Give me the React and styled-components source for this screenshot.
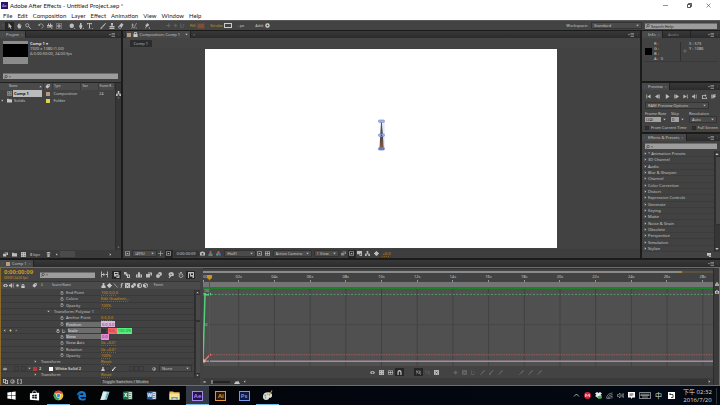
import React, { useState } from "react";
import styled, { createGlobalStyle, css } from "styled-components";

const GlobalStyle = createGlobalStyle`
  * {
    box-sizing: border-box;
  }
  body {
    margin: 0;
    background: #1b1b1b;
    color: #c6c6c6;
    font-family: "Noto Sans", "Noto Sans CJK TC", sans-serif;
    font-size: 4px;
    line-height: 5px;
    overflow: hidden;
  }
  button, input, select {
    margin: 0;
    padding: 0;
    border: 0;
    border-radius: 0;
    background: none;
    color: inherit;
    font: inherit;
    outline: none;
  }
  a {
    color: inherit;
    text-decoration: none;
  }
`;

/* every glyph is drawn on a 12 x 12 grid */
const glyphs = {
  arrow: <path d="M3 0v10l2.500-2 1.700 4 1.800-.8L7.300 7.400H10z" />,
  hand: <path d="M2 5l1-1 1 2V2h1.400v3V1h1.500v4l.6-3.500h1.400V6l1-1.500L11 5l-2 6H5z" />,
  zoom: (
    <g fill="none" stroke="currentColor">
      <circle cx="4.500" cy="4.500" r="3.200" strokeWidth="1.500" />
      <path d="M7 7l4.500 4.500" strokeWidth="2" />
    </g>
  ),
  rotate: (
    <g>
      <path d="M2 4a4.500 4.500 0 1 1 5 6.500" fill="none" stroke="currentColor" strokeWidth="1.200" />
      <path d="M0 3h5L2 6.500z" />
    </g>
  ),
  camera: <path d="M0 4h2V1h2v3h2V1h2v3l3-1v5L8 7v2h3v2H8V9H0V7h5V6H0z" />,
  anchor: (
    <g fill="none" stroke="currentColor">
      <rect x="1" y="1" width="10" height="10" strokeDasharray="2 2" strokeWidth="1.500" />
      <circle cx="6" cy="6" r="2.200" strokeWidth="1.500" />
      <path d="M6 2v8M2 6h8" />
    </g>
  ),
  disc: <path d="M1 5.500a4.500 4.500 0 1 1 9 0 4.500 4.500 0 1 1-9 0M9 10h3v2z" />,
  pen: <path d="M4 0h3v3l2 3-2.500 6h-2L2 6l2-3zM9 10h3v2z" />,
  type: <path d="M0 0h10v3H9L8 1.500H6V10l1.500 1h-5L4 10V1.500H2L1 3H0zM9 10h3v2z" />,
  brush: <path d="M11 0l1 1-6 7-2-1.500zM3.500 7L5.500 9 3 11.500H0z" />,
  stamp: <path d="M4 0h4v3L7 6h4v3H1V6h4L4 3zM1 10h10v2H1z" />,
  eraser: <path d="M7 0l4 3-5 8H2L0 8zM3 7L2 8.500 3 10h2l1-2z" fillRule="evenodd" />,
  roto: (
    <g fill="none" stroke="currentColor" strokeWidth="1.300">
      <path d="M3 1v7M1 4h5M3 8l-2 3M4 8l2 3M11 0L6 10M9 10h3" />
    </g>
  ),
  pin: <path d="M6 0l4 3-1 3-3 1-4 5 2-6-2-2 3-1zM9 9h3v3z" />,
  axis: <path d="M5 1h2v4h4v2H7v4H5V7H1V5h4z" />,
  axisLines: <path d="M1 1h2v8h6v2H1zM8 2l3 1-3 6z" />,
  down: <path d="M1 3h10L6 9z" />,
  up: <path d="M1 9h10L6 3z" />,
  right: <path d="M3 1v10l6-5z" />,
  left: <path d="M9 1v10L3 6z" />,
  menu: <path d="M0 4h4L2 7zM5 2h7v1.300H5zM5 5h7v1.300H5zM5 8h7v1.300H5z" />,
  grip: <path d="M5 0h2v2H5zM5 4h2v2H5zM5 8h2v2H5z" />,
  search: (
    <g fill="none" stroke="currentColor" strokeWidth="1.500">
      <circle cx="6.500" cy="4.500" r="3.500" />
      <path d="M4 7l-3 4" />
    </g>
  ),
  tag: <path d="M5 1l6-1 1 5-6 6-5-4zM9 2.500a1 1 0 1 0 .1 0" fillRule="evenodd" />,
  flow: <path d="M4 0h4v4H7v2h4v2h1v4H8V8H4v4H0V8h1V6h4V4H4z" />,
  comp: <path d="M0 0h12v12H0zM2 2v2h2V2zM2 8v2h2V8zM8 2v2h2V2zM8 8v2h2V8z" fillRule="evenodd" />,
  folder: <path d="M0 2h4l1 1h7v8H0z" />,
  footage: <path d="M0 4h8v7H0zM4 1h8v6h-3V3H4z" />,
  trash: <path d="M3 0h6v1.500h2V3H1V1.500h2zM2 4h8l-1 8H3zM4 5v6h1V5zM7 5v6h1V5z" fillRule="evenodd" />,
  eye: <path d="M0 6c3-5 9-5 12 0-3 5-9 5-12 0zM6 4a2 2 0 1 0 .1 0" fillRule="evenodd" />,
  sound: (
    <g>
      <path d="M0 4h3l4-4v12L3 8H0z" />
      <path d="M9 3q2 3 0 6M10.500 1q3 5 0 10" fill="none" stroke="currentColor" strokeWidth="1.200" />
    </g>
  ),
  lock: <path d="M2 5V3q0-3 4-3t4 3v2h1v7H1V5zM4 5h4V3Q8 2 6 2T4 3z" fillRule="evenodd" />,
  dot: <circle cx="6" cy="6" r="3" />,
  ring: <circle cx="6" cy="6" r="3.800" fill="none" stroke="currentColor" strokeWidth="3" />,
  diamond: <path d="M6 1l5 5-5 5-5-5z" />,
  watch: (
    <g fill="none" stroke="currentColor" strokeWidth="1.500">
      <circle cx="6" cy="7.300" r="3.800" />
      <path d="M6 0v3M4 .8h4M6 7l2-2M1 2l2 2" />
    </g>
  ),
  graph: <path d="M1 0h1.500v10H8v2H1zM5 3h2v2H5zM8 6h2v2H8z" />,
  link: (
    <g fill="none" stroke="currentColor" strokeWidth="1.500">
      <circle cx="6" cy="6" r="4.500" />
      <path d="M6 4h3v4H5V6" />
    </g>
  ),
  slash: <path d="M9 0h3L4 9v3H0V9z" />,
  thinSlash: <path d="M2 1l9 10" stroke="currentColor" strokeWidth="1.500" />,
  fx: <path d="M10 0H7Q5 0 5 4H3v1.500h2V9q0 2-2 1.500V12q4 0 4-3V5.500h2V4H7q0-2.500 1-2.500h2z" />,
  film: <path d="M0 0h12v12H0zM2 1.500v2h2v-2zM2 8.500v2h2v-2zM8 1.500v2h2v-2zM8 8.500v2h2v-2zM4.500 5h3v2h-3z" fillRule="evenodd" />,
  blur: <path d="M8 0a4 4 0 1 1 0 8 4 4 0 0 1-4 4 4 4 0 0 1-4-4 4 4 0 0 1 4-4 4 4 0 0 1 4-4zM5 4.500l2 2 1-1-2-2z" fillRule="evenodd" />,
  half: <path d="M6 0a6 6 0 1 1 0 12A6 6 0 0 1 6 0zM6 2v8a4 4 0 0 0 0-8z" fillRule="evenodd" />,
  cube: <path d="M6 0l6 3v6l-6 3-6-3V3zM6 1.500L2.500 3.200 6 5l3.500-1.800zM6.500 6v4.500l4-2V4z" fillRule="evenodd" />,
  shy: <path d="M4 2a2 2 0 1 1 4 0v3h4v6H0V5h4zM2 7v2h2V7zM8 7v2h2V7z" fillRule="evenodd" />,
  mini: <path d="M0 1h1.500v4H4V3l3 3-3 3V7H1.500v4H0zM12 1h-1.500v4H8v2h2.500v4H12z" />,
  draft: <path d="M0 0h9v9H0zM2 2v2h5V2zM4 6h7v6H5v-2h4V7H4z" fillRule="evenodd" />,
  puppet: <path d="M0 0h5v3h2v2h5v7H6V8H4V5H0zM8 7v3h2V7z" fillRule="evenodd" />,
  brain: <path d="M3 1q4-2 7 0 3 3 1 7H7l-4 4H1l2-4Q-1 4 3 1zM5 3v3l3-1z" fillRule="evenodd" />,
  graphEd: <path d="M0 0h12v12H9V9H4V3H2v9H0zM6 3v3h4V3z" fillRule="evenodd" />,
  first: <path d="M1 1h1.800v10H1zM11 1v10L3.500 6z" />,
  back: <path d="M7 1v10L0 6zM8 1h1.500v10H8zM10.500 1H12v10h-1.500z" />,
  play: <path d="M2 0v12l9-6z" />,
  step: <path d="M5 1v10l7-5zM0 1h1.500v10H0zM2.500 1H4v10H2.500z" />,
  last: <path d="M1 1v10l7.500-5zM9.200 1H11v10H9.200z" />,
  loop: <path d="M0 3h7V0l4 4-4 3V5H2v5h8V8h2v4H0z" />,
  ram: <path d="M0 1h1.500v10H0zM2.500 1H4v10H2.500zM5 1h7v2H8l4 3-7 5z" />,
  snapshot: <path d="M0 3h3l1-2h4l1 2h3v8H0zM6 4.500a2.300 2.300 0 1 0 .1 0" fillRule="evenodd" />,
  person: <path d="M4 0h4v5l3 3v4H1V8l3-3z" />,
  grid: <path d="M0 1h12v10H0zM1.500 2.500v3h3.700v-3zM6.700 2.500v3h3.800v-3zM1.500 7v2.500h3.700V7zM6.700 7v2.500h3.800V7z" fillRule="evenodd" />,
  region: <path d="M0 1h12v10H0zM1.500 2.500v7h9v-7zM3 7l3-3 3 3v1H3z" fillRule="evenodd" />,
  sun: <path d="M5 0h2v2.500l2-1L10 3 9 5h3v2H9l1 2-1.500 1.500-1.500-1V12H5V9.500l-2 1L1.500 9 3 7H0V5h3L1.500 3 3 1.500l2 1z" />,
  magnet: <path d="M1 12V5a5 5 0 0 1 10 0v7H8V5.500a2 2 0 0 0-4 0V12z" />,
  fit: (
    <g fill="none" stroke="currentColor" strokeWidth="1.300">
      <path d="M0 11V1l3 4M12 1v10" />
      <circle cx="6.500" cy="5" r="3" />
      <path d="M8 7l3 4" />
    </g>
  ),
  ease: <path d="M0 10q5 0 6-5t6-4v2Q9 3 8 6t-8 6zM4 5h3v3H4z" />,
  hill: <path d="M0 10l4-6 2 2 2-3 4 7z" />,
  braces: <path d="M4 0v2H3v3L2 6l1 1v3h1v2H1V7L0 6l1-1V0zM8 0v2h1v3l1 1-1 1v3H8v2h3V7l1-1-1-1V0z" />,
  toggles: <path d="M0 0h7v3h5v9H5V9H0zM2 2v5h3V2zM7 5v5h3V5z" fillRule="evenodd" />,
  plus: <path d="M5.300 0h1.400v5.300H12v1.400H6.700V12H5.300V6.700H0V5.300h5.300z" />,
  newPreset: <path d="M0 0h12v12H6V8H0zM8 6v4h2V6z" fillRule="evenodd" />,
};

const Svg = styled.svg`
  display: block;
  flex: none;
  width: ${({ $size }) => $size}px;
  height: ${({ $size }) => $size}px;
  color: ${({ $color }) => $color || "inherit"};
  fill: currentColor;
`;

const Glyph = ({ name, size = 5, color }) => (
  <Svg viewBox="0 0 12 12" $size={size} $color={color} aria-hidden="true">
    {glyphs[name]}
  </Svg>
);

const Screen = styled.div`
  height: 100vh;
  display: flex;
  flex-direction: column;
`;

const TitleBar = styled.header`
  flex: none;
  height: 11px;
  display: flex;
  align-items: center;
  gap: 2px;
  padding: 0 6px 0 1px;
  background: #fff;
  color: #222;
  font-family: Lato, "Open Sans", sans-serif;

  h1 {
    flex: 1;
    margin: 0;
    font-size: 6px;
    line-height: 8px;
    font-weight: 400;
  }
`;

const WindowButton = styled.button`
  width: 22px;
  height: 9px;
  display: flex;
  align-items: center;
  justify-content: center;

  &:last-child {
    width: 12px;
    justify-content: flex-end;
    padding-right: 3px;
  }
  svg {
    width: 5px;
    height: 5px;
    fill: none;
    stroke: #222;
  }
`;

const MenuBar = styled.nav`
  flex: none;
  height: 9px;
  display: flex;
  align-items: center;
  gap: 5px;
  padding: 0 3px;
  background: #fff;
  color: #222;
  font-family: Lato, "Open Sans", sans-serif;
  font-size: 6px;
  line-height: 8px;
`;

const Bar = styled.div`
  flex: none;
  height: ${({ $height }) => $height || 8}px;
  display: flex;
  align-items: center;
  gap: ${({ $gap }) => $gap || 0}px;
  padding: 0 ${({ $pad = 2 }) => $pad}px;
  background: ${({ $bg }) => $bg || "#434343"};
`;

const Toolbar = styled(Bar)`
  border-top: 1px solid #5a5a5a;
`;

const IconButton = styled.button`
  flex: none;
  width: ${({ $width }) => $width || 9}px;
  height: ${({ $height }) => $height || 8}px;
  display: flex;
  align-items: center;
  justify-content: center;
  color: ${({ $dim }) => ($dim ? "#666" : "#bdbdbd")};
  background: ${({ $pressed }) => ($pressed ? "#262626" : "none")};
`;

const Spring = styled.span`
  flex: 1;
`;

const Gap = styled.span`
  flex: none;
  width: ${({ $width }) => $width}px;
`;

const Orange = styled.button`
  color: #d0951c;
  white-space: nowrap;
  text-decoration: ${({ $line }) => ($line ? "underline dotted 1px #7a5f2a" : "none")};
`;

const Swatch = styled.i`
  flex: none;
  width: ${({ $width }) => $width || 4}px;
  height: ${({ $height }) => $height || 4}px;
  background: ${({ $fill }) => $fill};
  border: ${({ $edge }) => ($edge ? `1px solid ${$edge}` : "0")};
`;

const SelectShell = styled.span`
  flex: ${({ $width }) => ($width ? "none" : 1)};
  width: ${({ $width }) => ($width ? `${$width}px` : "auto")};
  min-width: 0;
  height: 7px;
  display: flex;
  align-items: center;
  padding: 0 2px;
  border: 1px solid #333;
  background: #4a4a4a;

  select {
    flex: 1;
    min-width: 0;
    height: 5px;
    appearance: none;
    overflow: visible;
  }
`;

const Select = ({ label, value, width }) => (
  <SelectShell $width={width}>
    <select aria-label={label} defaultValue={value}>
      <option>{value}</option>
    </select>
    <Glyph name="down" size={3} />
  </SelectShell>
);

const SearchShell = styled.label`
  flex: ${({ $width }) => ($width ? "none" : "0 0 auto")};
  width: ${({ $width }) => ($width ? `${$width}px` : "auto")};
  height: 6px;
  display: flex;
  align-items: center;
  gap: 1px;
  padding: 0 1px;
  margin: ${({ $margin }) => $margin || 0};
  background: #9d9d9d;
  border-top: 1px solid #6d6d6d;
  color: #222;

  input {
    flex: 1;
    min-width: 0;
    height: 5px;
    &::placeholder {
      color: #222;
      opacity: 1;
    }
  }
`;

const Search = ({ label, width, margin, placeholder, arrow = true }) => (
  <SearchShell $width={width} $margin={margin}>
    <Glyph name="search" size={4} />
    {arrow && <Glyph name="down" size={2} />}
    <input type="text" aria-label={label} placeholder={placeholder} />
  </SearchShell>
);

const Panel = styled.section`
  flex: ${({ $flex }) => $flex || "none"};
  min-width: 0;
  min-height: 0;
  display: flex;
  flex-direction: column;
  background: #424242;
`;

const TabStrip = styled.div`
  flex: none;
  height: 7px;
  display: flex;
  align-items: center;
  padding-right: 1px;
  background: linear-gradient(#383838, #2b2b2b);
`;

const Tab = styled.button`
  height: 7px;
  display: flex;
  align-items: center;
  gap: 2px;
  padding: 0 2px 0 1px;
  white-space: nowrap;
  color: ${({ $active }) => ($active ? "#c6c6c6" : "#808080")};
  background: ${({ $active }) => ($active ? "#484848" : "none")};
  border-right: 1px solid #222;
`;

const Close = styled.span`
  color: #888;
`;

const PanelTabs = ({ active, other }) => (
  <TabStrip>
    <Tab $active>
      <Glyph name="grip" size={3} color="#666" />
      {active}
      <Close>×</Close>
    </Tab>
    {other && (
      <Tab>
        <Gap $width={2} />
        {other}
        <Gap $width={7} />
      </Tab>
    )}
    <Spring />
    <Glyph name="menu" size={6} color="#999" />
    <Gap $width={2} />
    <Glyph name="grip" size={3} color="#666" />
  </TabStrip>
);

const Workspace = styled.main`
  flex: 1;
  min-height: 0;
  display: grid;
  grid-template-columns: 17fr 73fr 11fr;
  gap: 2px;
  padding-top: 1px;
`;

/* project panel */

const Preview = styled.div`
  flex: 1;
  display: flex;
  gap: 2px;
  padding: 3px;

  p {
    margin: 0;
    white-space: nowrap;
  }
  b {
    color: #ddd;
  }
`;

const Thumb = styled.div`
  width: 25px;
  height: 23px;
  background: #000;
  border-style: solid;
  border-color: #8b8b8b;
  border-width: 3px 0 7px;
`;

const FileTable = styled.table`
  width: 100%;
  border-collapse: collapse;
  table-layout: fixed;

  th {
    height: 7px;
    padding: 0;
    background: #4a4a4a;
    border-right: 1px solid #3a3a3a;
    font-weight: 400;
    font-size: 3px;
    text-align: left;
    white-space: nowrap;
  }
  td {
    height: 7px;
    padding: 0;
    white-space: nowrap;
  }
  th:nth-child(n + 3),
  td:nth-child(n + 3) {
    padding-left: 1px;
  }
`;

const Cell = styled.span`
  display: flex;
  align-items: center;
  gap: 1px;
  justify-content: ${({ $align }) => $align || "flex-start"};
  padding: 0 1px;
`;

const FileName = styled.span`
  flex: 1;
  height: 7px;
  line-height: 7px;
  padding-left: 1px;
  ${({ $selected }) =>
    $selected &&
    css`
      background: #bcbcbc;
      color: #111;
      font-weight: 700;
    `}
`;

const FileArea = styled.div`
  flex: 0 0 168px;
  min-height: 0;
  display: flex;
  border-top: 1px solid #222;

  > div:first-child {
    flex: 1;
    min-width: 0;
  }
`;

const ScrollColumn = styled.div`
  flex: none;
  width: 6px;
  display: flex;
  flex-direction: column;
  align-items: center;
  justify-content: space-between;
  padding: ${({ $top = 1 }) => $top}px 0 1px;
  background: #363636;
  border-left: 1px solid #2d2d2d;
`;

const Thumbnail = styled.span`
  width: 5px;
  flex: ${({ $grow }) => $grow};
  background: #484848;
  border: 1px solid #2f2f2f;
  border-right: 0;
`;

const ProjectPanel = () => (
  <Panel>
    <PanelTabs active="Project" />
    <Preview>
      <Thumb />
      <div>
        <p>
          <b>Comp 1 ▾</b>
        </p>
        <p>1920 x 1080 (1.00)</p>
        <p>Δ 0:00:30:00, 24.00 fps</p>
      </div>
    </Preview>
    <Search label="Search project" margin="0 3px 3px" />
    <FileArea>
      <div>
        <FileTable>
          <colgroup>
            <col style={{ width: "38%" }} />
            <col style={{ width: "8%" }} />
            <col style={{ width: "25%" }} />
            <col style={{ width: "15%" }} />
            <col />
          </colgroup>
          <thead>
            <tr>
              <th>
                <Cell>
                  <Gap $width={7} />
                  Name
                  <Spring />
                  <Glyph name="up" size={3} />
                </Cell>
              </th>
              <th>
                <Cell $align="center">
                  <Glyph name="tag" size={5} />
                </Cell>
              </th>
              <th>Type</th>
              <th>Size</th>
              <th>Frame R...</th>
            </tr>
          </thead>
          <tbody>
            <tr>
              <td>
                <Cell>
                  <Gap $width={5} />
                  <Glyph name="comp" color="#77888a" />
                  <FileName $selected>Comp 1</FileName>
                </Cell>
              </td>
              <td>
                <Cell $align="center">
                  <Swatch $fill="#b79b7d" />
                </Cell>
              </td>
              <td>Composition</td>
              <td />
              <td>24</td>
            </tr>
            <tr>
              <td>
                <Cell>
                  <Glyph name="right" size={3} />
                  <Gap $width={1} />
                  <Glyph name="folder" />
                  <FileName>Solids</FileName>
                </Cell>
              </td>
              <td>
                <Cell $align="center">
                  <Swatch $fill="#e0d24c" />
                </Cell>
              </td>
              <td>Folder</td>
              <td />
              <td />
            </tr>
          </tbody>
        </FileTable>
      </div>
      <ScrollColumn $top={8}>
        <Glyph name="flow" size={5} />
        <Glyph name="up" size={3} color="#777" />
        <Spring />
        <Glyph name="down" size={3} color="#777" />
      </ScrollColumn>
    </FileArea>
    <Bar $bg="#3b3b3b" $pad={1}>
      <IconButton><Glyph name="footage" /></IconButton>
      <IconButton><Glyph name="folder" /></IconButton>
      <IconButton><Glyph name="comp" /></IconButton>
      <Gap $width={2} />
      8 bpc
      <Gap $width={4} />
      <IconButton><Glyph name="trash" /></IconButton>
      <Gap $width={2} />
      <Glyph name="left" size={3} />
      <Gap $width={2} />
      <Swatch $fill="#4b4b4b" $width={15} $height={6} />
      <Spring />
      <Glyph name="right" size={3} />
      <Gap $width={8} />
    </Bar>
  </Panel>
);

/* composition viewer */

const CompButton = styled.button`
  height: 7px;
  padding: 0 4px;
  background: #2c2c2c;
  color: #b8b8b8;
`;

const Stage = styled.div`
  flex: 1;
  min-height: 0;
  display: flex;
  justify-content: center;
  padding: 1px 0;
`;

const Canvas = styled.svg`
  display: block;
  width: 68%;
  height: 100%;
  background: #fff;
`;

const Artwork = () => (
  <Canvas viewBox="0 0 353 199" preserveAspectRatio="none" role="img" aria-label="Comp 1">
    <defs>
      <linearGradient id="needle" x1="0" y1="0" x2="0" y2="1">
        <stop offset="0" stopColor="#44608f" />
        <stop offset="0.500" stopColor="#47464d" />
        <stop offset="1" stopColor="#8b5b38" />
      </linearGradient>
    </defs>
    <path d="M176.500 73L175 100h4.500L177.500 73z" fill="url(#needle)" />
    <path d="M179.500 72v28" stroke="#b9c3ea" strokeWidth="0.600" />
    <g fill="#a9b6e4" stroke="#6b7cc0" strokeWidth="0.600">
      <rect x="174" y="71" width="6" height="2.400" rx="1" />
      <rect x="174" y="85" width="6" height="2.400" rx="1" />
      <rect x="174" y="98.500" width="6" height="2.600" rx="1" fill="#6979c2" />
    </g>
    <circle cx="177" cy="86.200" r="0.800" fill="#303b75" />
  </Canvas>
);

const TimeButton = styled.button`
  width: 25px;
  height: 6px;
  background: #343434;
`;

const CompositionPanel = () => (
  <Panel>
    <TabStrip>
      <Glyph name="grip" size={3} color="#666" />
      <Tab $active>
        <Swatch $fill="#b79b7d" />
        <Glyph name="lock" size={5} />
        Composition: Comp 1
        <Gap $width={1} />
        <Glyph name="down" size={3} />
      </Tab>
      <Gap $width={2} />
      <Close>×</Close>
      <Spring />
      <Glyph name="menu" size={6} color="#999" />
      <Gap $width={2} />
      <Glyph name="grip" size={3} color="#666" />
    </TabStrip>
    <Bar $height={10} $pad={7} $bg="#444">
      <CompButton>Comp 1</CompButton>
    </Bar>
    <Stage>
      <Artwork />
    </Stage>
    <Bar $height={9} $bg="#3e3e3e" $pad={0}>
      <IconButton><Glyph name="region" /></IconButton>
      <Select label="Magnification" value="(49%)" width={25} />
      <IconButton $width={8}><Glyph name="plus" /></IconButton>
      <IconButton $width={8} $pressed><Glyph name="region" /></IconButton>
      <Gap $width={1} />
      <TimeButton>0:00:00:09</TimeButton>
      <IconButton $width={8}><Glyph name="snapshot" /></IconButton>
      <IconButton $width={8}><Glyph name="person" color="#777" /></IconButton>
      <IconButton $width={8}>
        <svg width="5" height="5" viewBox="0 0 12 12" aria-hidden="true">
          <circle cx="6" cy="3.500" r="3" fill="#cc5b4f" />
          <circle cx="3" cy="8.500" r="3" fill="#4da35a" />
          <circle cx="9" cy="8.500" r="3" fill="#4e68cf" />
        </svg>
      </IconButton>
      <Gap $width={1} />
      <Select label="Resolution" value="(Half)" width={32} />
      <IconButton $width={8}><Glyph name="region" /></IconButton>
      <IconButton $width={8}><Glyph name="grid" /></IconButton>
      <Gap $width={1} />
      <Select label="3D view" value="Active Camera" width={39} />
      <Gap $width={2} />
      <Select label="View layout" value="1 View" width={25} />
      <Gap $width={1} />
      <IconButton $width={8}><Glyph name="footage" color="#888" /></IconButton>
      <IconButton $width={8} $pressed><Glyph name="region" /></IconButton>
      <IconButton $width={8}><Glyph name="newPreset" /></IconButton>
      <IconButton $width={8}><Glyph name="flow" /></IconButton>
      <IconButton $width={9}><Glyph name="sun" /></IconButton>
      <Gap $width={2} />
      <Orange $line>+0.0</Orange>
    </Bar>
  </Panel>
);

/* right column */

const SideColumn = styled.div`
  min-width: 0;
  min-height: 0;
  display: flex;
  flex-direction: column;
  gap: 2px;
`;

const InfoBody = styled.div`
  height: 43px;
  padding: 3px 2px;
`;

const InfoRow = styled.div`
  display: flex;
  align-items: center;
  height: 21px;
  border-bottom: 1px solid #393939;
  white-space: pre;

  p {
    margin: 0;
  }
`;

const Readout = styled.div`
  align-self: flex-start;
  width: ${({ $width }) => $width || 26}px;
`;

const Rule = styled.span`
  width: 1px;
  height: 19px;
  background: #2f2f2f;
`;

const PreviewBody = styled.div`
  flex: 1;
  display: flex;
  flex-direction: column;
  padding: 2px 3px;
`;

const Transport = styled.div`
  display: flex;
  justify-content: space-between;
  margin-bottom: 2px;
`;

const Fields = styled.div`
  display: grid;
  grid-template-columns: 24px 16px 1fr;
  column-gap: 2px;
  margin-top: 2px;
  white-space: nowrap;
`;

const Combo = styled.span`
  display: flex;
  align-items: center;
  gap: 2px;
  height: 7px;

  input {
    flex: 1;
    min-width: 0;
    height: 5px;
    padding-left: 1px;
    background: #a2a2a2;
    color: #222;
  }
`;

const Checks = styled.div`
  display: flex;
  gap: 5px;
  margin-top: 2px;

  label {
    display: flex;
    align-items: center;
    gap: 2px;
    white-space: nowrap;
  }
  input {
    appearance: none;
    width: 4px;
    height: 4px;
    background: #333;
    border: 1px solid #2a2a2a;
  }
`;

const EffectList = styled.ul`
  flex: 1;
  min-height: 0;
  min-width: 0;
  display: grid;
  grid-auto-rows: 1fr;
  margin: 0;
  padding: 0;
  list-style: none;
`;

const Effect = styled.li`
  display: flex;
  align-items: center;
  min-height: 0;
  border-bottom: 1px solid #3c3c3c;

  button {
    display: flex;
    align-items: center;
    gap: 1px;
    padding-left: 2px;
    white-space: nowrap;
  }
`;

const EffectArea = styled.div`
  flex: 1;
  min-height: 0;
  display: flex;
`;

const effects = [
  "* Animation Presets",
  "3D Channel",
  "Audio",
  "Blur & Sharpen",
  "Channel",
  "Color Correction",
  "Distort",
  "Expression Controls",
  "Generate",
  "Keying",
  "Matte",
  "Noise & Grain",
  "Obsolete",
  "Perspective",
  "Simulation",
  "Stylize",
];

const transport = ["first", "back", "play", "step", "last", "sound", "loop", "ram"];

const SidePanels = () => (
  <SideColumn>
    <Panel>
      <PanelTabs active="Info" other="Audio" />
      <InfoBody>
        <InfoRow>
          <Gap $width={1} />
          <Swatch $fill="#000" $width={7} $height={7} />
          <Gap $width={2} />
          <Readout>
            <p>R :</p>
            <p>G :</p>
            <p>B :</p>
            <p>A :  0</p>
          </Readout>
          <Rule />
          <Gap $width={2} />
          <Glyph name="plus" size={4} color="#888" />
          <Gap $width={2} />
          <Readout>
            <p>X : 573</p>
            <p>Y : 1086</p>
          </Readout>
        </InfoRow>
      </InfoBody>
    </Panel>
    <Panel>
      <PanelTabs active="Preview" />
      <PreviewBody>
        <Transport>
          {transport.map((name) => (
            <IconButton key={name} $width={7} aria-label={name}>
              <Glyph name={name} />
            </IconButton>
          ))}
        </Transport>
        <Select label="Preview options" value="RAM Preview Options" width={64} />
        <Fields>
          <label htmlFor="rate">Frame Rate</label>
          <label htmlFor="skip">Skip</label>
          <span>Resolution</span>
          <Combo>
            <input id="rate" defaultValue="(24)" />
            <Glyph name="down" size={3} />
            <Gap $width={1} />
          </Combo>
          <Combo>
            <input id="skip" defaultValue="0" />
            <Glyph name="down" size={3} />
            <Gap $width={1} />
          </Combo>
          <Select label="Resolution" value="Auto" />
        </Fields>
        <Checks>
          <label>
            <input type="checkbox" />
            From Current Time
          </label>
          <label>
            <input type="checkbox" />
            Full Screen
          </label>
        </Checks>
      </PreviewBody>
    </Panel>
    <Panel $flex={1}>
      <PanelTabs active="Effects & Presets" />
      <Search label="Search effects" margin="2px 3px 2px" />
      <EffectArea>
        <EffectList>
          {effects.map((name) => (
            <Effect key={name}>
              <button>
                <Glyph name="right" size={3} />
                {name}
              </button>
            </Effect>
          ))}
        </EffectList>
        <ScrollColumn>
          <Glyph name="up" size={4} />
          <Thumbnail $grow={3} />
          <Spring />
          <Glyph name="down" size={4} />
        </ScrollColumn>
      </EffectArea>
      <Bar $height={6}>
        <Spring />
        <Glyph name="newPreset" size={4} />
        <Gap $width={7} />
      </Bar>
    </Panel>
  </SideColumn>
);

/* timeline */

const TimelinePanel = styled.section`
  flex: none;
  height: 126px;
  margin-top: 2px;
  display: flex;
  flex-direction: column;
`;

const TimelineBody = styled.div`
  flex: 1;
  min-height: 0;
  display: flex;
  background: #424242;
  border: 1px solid #8d6b25;
`;

const LayerSide = styled.div`
  flex: none;
  width: 199px;
  display: flex;
  flex-direction: column;
`;

const Timecode = styled.div`
  width: 36px;
  color: #d1961d;
  font-size: 3px;
  line-height: 4px;

  b {
    display: block;
    font-size: 6px;
    line-height: 7px;
  }
`;

const ColumnHead = styled(Bar)`
  background: #4b4b4b;
  border-top: 1px solid #363636;
  font-size: 3px;
  white-space: nowrap;
`;

const Rows = styled.div`
  flex: 1;
  min-width: 0;
  display: grid;
  grid-auto-rows: 1fr;
`;

const Row = styled.div`
  display: grid;
  grid-template-columns: 100px 1fr;
  align-items: center;
  min-height: 0;
  border-bottom: 1px solid #393939;
  white-space: nowrap;
`;

const RowName = styled.div`
  display: flex;
  align-items: center;
  gap: 2px;
  padding-left: ${({ $indent }) => $indent}px;
`;

const PropName = styled.span`
  width: 36px;
  ${({ $selected }) =>
    $selected &&
    css`
      color: #e0e0e0;
      background: #6d6d6d;
    `}
`;

const Values = styled.div`
  display: flex;
  align-items: center;
`;

const Chip = styled.button`
  height: 6px;
  padding: 0 1px;
  background: ${({ $bg }) => $bg};
  color: ${({ $color }) => $color || "#5a3b55"};
`;

const Keys = styled.div`
  display: flex;
  align-items: center;
  gap: 3px;
  width: 55px;
`;

const Prop = ({ name, value, selected, children }) => (
  <Row>
    <RowName $indent={59}>
      <Glyph name="watch" size={4} />
      <PropName $selected={selected}>{name}</PropName>
    </RowName>
    <Values>{children || <Orange $line>{value}</Orange>}</Values>
  </Row>
);

const Group = ({ name, indent, open, value }) => (
  <Row>
    <RowName $indent={indent}>
      <Glyph name={open ? "down" : "right"} size={3} />
      <Gap />
      <span>{name}</span>
    </RowName>
    <Values>{value && <Orange $line>{value}</Orange>}</Values>
  </Row>
);

const Box = styled.i`
  flex: none;
  width: 5px;
  height: 5px;
  border: 1px solid #383838;
`;

const LayerRows = () => (
  <Rows>
    <Prop name="End Point" value="100.0,0.0" />
    <Prop name="Colors" value="Edit Gradient..." />
    <Prop name="Opacity" value="100%" />
    <Group name="Transform: Polystar 1" indent={46} open />
    <Prop name="Anchor Point" value="0.0,0.0" />
    <Prop name="Position" selected>
      <Chip $bg="#dcb9dc">0.0,0.0</Chip>
    </Prop>
    <Row>
      <RowName $indent={2}>
        <Keys>
          <Glyph name="left" size={3} />
          <Glyph name="diamond" size={3} color="#e8c070" />
          <Glyph name="right" size={3} color="#888" />
        </Keys>
        <Glyph name="watch" size={4} color="#eee" />
        <Glyph name="graph" size={4} />
        <PropName $selected>Scale</PropName>
      </RowName>
      <Values>
        <Swatch $fill="#333" $width={5} />
        <Gap $width={2} />
        <Chip $bg="#f0666c" $color="#a31f2a">0.0,</Chip>
        <Chip $bg="#55f07c" $color="#157a35">100.0%</Chip>
      </Values>
    </Row>
    <Prop name="Skew" selected>
      <Chip $bg="#e88ad6">0.0</Chip>
    </Prop>
    <Prop name="Skew Axis" value="0x +0.0°" />
    <Prop name="Rotation" value="0x +0.0°" />
    <Prop name="Opacity" value="100%" />
    <Group name="Transform" indent={33} value="Reset" />
    <Row>
      <RowName $indent={2}>
        <Glyph name="eye" size={4} />
        <Gap $width={3} />
        <Box />
        <Box />
        <Glyph name="down" size={3} />
        <Swatch $fill="#b63a38" />
        <b>2</b>
        <Gap $width={4} />
        <Swatch $fill="#fff" />
        <b>White Solid 2</b>
      </RowName>
      <Values>
        <Glyph name="person" size={4} />
        <Box />
        <Gap $width={2} />
        <Glyph name="slash" size={4} color="#eee" />
        <Gap $width={13} />
        <Box />
        <Box />
        <Box />
        <Gap $width={8} />
        <Glyph name="link" size={4} />
        <Gap $width={3} />
        <Select label="Parent" value="None" width={33} />
      </Values>
    </Row>
    <Group name="Transform" indent={33} value="Reset" />
  </Rows>
);

const LayerArea = styled.div`
  flex: 1;
  min-height: 0;
  display: flex;
  padding-top: 1px;
`;

const Footer = styled(Bar)`
  background: #3b3b3b;
`;

const ToggleButton = styled.button`
  width: 49px;
  height: 6px;
  background: #494949;
  border: 1px solid #333;
  line-height: 4px;
  white-space: nowrap;
`;

const TimeSide = styled.div`
  position: relative;
  flex: 1;
  min-width: 0;
  display: flex;
  flex-direction: column;
  padding-left: 3px;
`;

const Navigator = styled.div`
  height: 6px;
  padding: 2px 0 1px;
  display: flex;
  border-top: 1px solid #303030;
`;

const NavRange = styled.span`
  width: 94%;
  background: #8b8b8b;
  border-right: 3px solid #b6871f;
`;

const NavRest = styled.span`
  flex: 1;
  background: #5a5344;
`;

const Ruler = styled.div`
  height: 8px;
  display: grid;
  grid-template-columns: repeat(14, 7%) 2%;

  span {
    width: 10px;
    margin-left: -5px;
    text-align: center;
    line-height: 5px;
    &::after {
      content: "";
      display: block;
      width: 1px;
      height: 2px;
      margin: 1px auto 0;
      background: #999;
    }
  }
  span:first-child {
    margin-left: 0;
    text-align: left;
    &::after {
      margin-left: 0;
    }
  }
`;

const WorkArea = styled.div`
  height: 7px;
  background: #747474;
  border-bottom: 2px solid #1e8128;
`;

const Chart = styled.svg`
  display: block;
  flex: 1;
  width: 100%;
  min-height: 0;
  background: #505050;
`;

const Playhead = styled.i`
  position: absolute;
  top: 7px;
  bottom: 19px;
  left: 9px;
  width: 1px;
  background: #ac3030;

  &::before {
    content: "";
    position: absolute;
    top: 0;
    left: -2px;
    width: 5px;
    height: 5px;
    background: #c8951f;
    clip-path: polygon(0 0, 100% 0, 100% 60%, 50% 100%, 0 60%);
  }
`;

const GraphScale = styled.span`
  position: absolute;
  left: 4px;
  top: ${({ $top }) => $top}px;
  color: #c4c4c4;
  font-size: 3px;
  line-height: 4px;
`;

const EdgeColumn = styled.div`
  flex: none;
  width: 6px;
  display: flex;
  flex-direction: column;
  align-items: center;
  gap: 4px;
  padding-top: 14px;
  background: #3a3a3a;
  border-left: 1px solid #2b2b2b;
`;

const ZoomSlider = styled.input`
  appearance: none;
  width: 19px;
  height: 2px;
  background: #222;

  &::-webkit-slider-thumb {
    appearance: none;
    width: 2px;
    height: 4px;
    background: #777;
  }
`;

const seconds = ["00", "02", "04", "06", "08", "10", "12", "14", "16", "18", "20", "22", "24", "26", "28"];

const SpeedGraph = () => (
  <Chart viewBox="0 0 510 79" preserveAspectRatio="none" role="img" aria-label="Value graph">
    {seconds.map((s, i) => (
      <path key={s} d={`M${i * 35.7} 0V79`} stroke="#414141" strokeWidth="1" />
    ))}
    <path d="M0 36.500H510" stroke="#474747" strokeWidth="1" />
    <path d="M8 5.500H510" stroke="#58b26e" strokeWidth="0.800" strokeDasharray="2 1.500" />
    <path d="M8 67.500H510" stroke="#b5625a" strokeWidth="0.800" strokeDasharray="1.500 1" />
    <path d="M0 74.200H510" stroke="#a58ba0" strokeWidth="1.600" />
    <path d="M0 74L2 6H7" fill="none" stroke="#52cf78" strokeWidth="1.500" />
    <path d="M1 74L7 67.500" stroke="#e27b72" strokeWidth="1.400" />
    <g fill="#52cf78">
      <rect x="0.500" y="4" width="2.500" height="2.500" />
      <rect x="5.500" y="4" width="2.500" height="2.500" />
    </g>
    <circle cx="7" cy="67.500" r="1.200" fill="#ef6a65" />
    <circle cx="0.800" cy="73.800" r="1.800" fill="#efb08e" />
  </Chart>
);

const graphTools = ["eye", "comp", "grid", "magnet", null, "fit", "fit", "film", null];
const keyTools = ["diamond", "film", "graph", "ease", "slash", "ease"];
const easeTools = ["ease", "ease", "ease"];

const Timeline = () => (
  <TimelinePanel>
    <TabStrip>
      <Tab $active>
        <Glyph name="grip" size={3} color="#666" />
        <Swatch $fill="#b79b7d" />
        Comp 1
        <Close>×</Close>
      </Tab>
      <Spring />
      <Glyph name="menu" size={6} color="#999" />
      <Gap $width={2} />
      <Glyph name="grip" size={3} color="#666" />
    </TabStrip>
    <TimelineBody>
      <LayerSide>
        <Bar $height={13} $pad={3}>
          <Timecode>
            <b>0:00:00:09</b>
            00009 (24.00 fps)
          </Timecode>
          <Search label="Search layers" width={55} />
          <Gap $width={4} />
          <IconButton $width={10}><Glyph name="mini" size={7} /></IconButton>
          <Gap $width={3} />
          <IconButton $width={9} $pressed><Glyph name="draft" size={6} /></IconButton>
          <Gap $width={1} />
          <IconButton $width={10}><Glyph name="puppet" size={6} /></IconButton>
          <Gap $width={2} />
          <IconButton $width={10}><Glyph name="shy" size={6} /></IconButton>
          <IconButton $width={10}><Glyph name="footage" size={6} /></IconButton>
          <IconButton $width={10}><Glyph name="blur" size={6} /></IconButton>
          <Gap $width={2} />
          <IconButton $width={10}><Glyph name="brain" size={6} /></IconButton>
          <IconButton $width={10}><Glyph name="watch" size={6} /></IconButton>
          <IconButton $width={9} $pressed><Glyph name="graphEd" size={6} /></IconButton>
        </Bar>
        <ColumnHead $gap={1} $height={8}>
          <Glyph name="eye" />
          <Glyph name="sound" />
          <Glyph name="dot" />
          <Glyph name="lock" size={4} />
          <Gap $width={5} />
          <Glyph name="tag" />
          <Gap $width={2} />
          <span>#</span>
          <Gap $width={7} />
          <span>Source Name</span>
          <Spring />
          {["person", "sun", "thinSlash", "fx", "film", "blur", "half", "cube"].map((name) => (
            <Glyph key={name} name={name} />
          ))}
          <Gap $width={4} />
          <span>Parent</span>
          <Gap $width={34} />
        </ColumnHead>
        <LayerArea>
          <LayerRows />
          <ScrollColumn>
            <Glyph name="up" size={3} />
            <Thumbnail $grow={1} />
            <Thumbnail $grow={2} />
            <Glyph name="down" size={3} />
          </ScrollColumn>
        </LayerArea>
        <Footer $height={7} $gap={2}>
          <Glyph name="toggles" />
          <Glyph name="link" />
          <Glyph name="braces" />
          <Gap $width={75} />
          <ToggleButton>Toggle Switches / Modes</ToggleButton>
        </Footer>
      </LayerSide>
      <TimeSide>
        <Navigator>
          <NavRange />
          <NavRest />
        </Navigator>
        <Ruler>
          {seconds.map((s) => (
            <span key={s}>{s}s</span>
          ))}
        </Ruler>
        <WorkArea />
        <SpeedGraph />
        <Bar $height={12} $pad={0}>
          <Gap $width={165} />
          {graphTools.map((name, i) =>
            name ? (
              <IconButton key={i} $pressed={i === 3 || i === 5} $dim={i === 6}>
                <Glyph name={name} />
              </IconButton>
            ) : (
              <Gap key={i} $width={10} />
            )
          )}
          {keyTools.map((name, i) => (
            <IconButton key={i} $dim>
              <Glyph name={name} />
            </IconButton>
          ))}
          <Gap $width={12} />
          {easeTools.map((name, i) => (
            <IconButton key={i} $dim>
              <Glyph name={name} />
            </IconButton>
          ))}
        </Bar>
        <Footer $height={7} $pad={0}>
          <Glyph name="hill" size={3} />
          <Gap $width={5} />
          <ZoomSlider type="range" aria-label="Timeline zoom" defaultValue="0" />
          <Gap $width={4} />
          <Glyph name="hill" size={6} />
          <Gap $width={3} />
          <Glyph name="left" size={3} />
          <Spring />
          <Swatch $fill="#333" $width={28} $height={6} />
          <Glyph name="right" size={3} />
          <Gap $width={2} />
        </Footer>
        <GraphScale $top={21}>100</GraphScale>
        <GraphScale $top={55}>50</GraphScale>
        <Playhead />
      </TimeSide>
      <EdgeColumn>
        <Glyph name="shy" size={4} />
        <Glyph name="snapshot" size={4} />
      </EdgeColumn>
    </TimelineBody>
  </TimelinePanel>
);

/* taskbar */

const Taskbar = styled.footer`
  flex: none;
  height: 19px;
  display: flex;
  justify-content: space-between;
  background: linear-gradient(90deg, #040404, #02060f 60%, #030912);
  color: #ddd;
`;

const Apps = styled.div`
  width: 279px;
  display: flex;
`;

const AppButton = styled.button`
  flex: 1;
  display: flex;
  align-items: center;
  justify-content: center;
  background: ${({ $active }) => ($active ? "#343a44" : "none")};
  box-shadow: ${({ $running }) => ($running ? "inset 0 -1px #76b9ed" : "none")};

  svg {
    width: 11px;
    height: 11px;
  }
`;

const Adobe = styled.span`
  width: 11px;
  height: 10px;
  border: 1px solid ${({ $color }) => $color};
  background: ${({ $bg }) => $bg};
  color: ${({ $color }) => $color};
  font-size: ${({ $small }) => ($small ? 4 : 6)}px;
  font-weight: 600;
  line-height: ${({ $small }) => ($small ? 5 : 8)}px;
  text-align: center;
  ${({ $small }) =>
    $small &&
    css`
      width: 7px;
      height: 7px;
      border-color: #2a1466;
    `}
`;

const Office = ({ color, dark, letter }) => (
  <svg viewBox="0 0 24 24" aria-hidden="true">
    <path d="M13 4h9v16h-9z" fill="#eef3f0" stroke={color} />
    <path d="M15 8h5M15 12h5M15 16h5" stroke={color} strokeWidth="1.500" />
    <path d="M2 4l12-2v20L2 20z" fill={dark} />
    <text x="8" y="16" fill="#fff" fontSize="11" fontWeight="700" textAnchor="middle">
      {letter}
    </text>
  </svg>
);

const Tray = styled.div`
  display: flex;
  align-items: center;
`;

const TrayButton = styled.button`
  width: ${({ $width }) => $width || 11}px;
  height: 100%;
  display: flex;
  align-items: center;
  justify-content: center;
  font-family: "Noto Sans CJK TC", sans-serif;
  font-size: 7px;

  svg {
    display: block;
    height: 7px;
  }
`;

const Clock = styled.time`
  width: 38px;
  margin-right: 3px;
  border-right: 1px solid #333;
  text-align: center;
  font-family: "Open Sans", "Noto Sans CJK TC", sans-serif;
  font-size: 6px;
  line-height: 8px;
  white-space: nowrap;
`;

const WindowsTaskbar = () => (
  <Taskbar>
    <Apps>
      <AppButton aria-label="Start">
        <svg viewBox="0 0 24 24" fill="#fff">
          <path d="M3 5.500l8-1.200v7.200H3zM12 4.200L21 3v8.500h-9zM3 12.500h8v7.200l-8-1.200zM12 12.500h9V21l-9-1.200z" />
        </svg>
      </AppButton>
      <AppButton aria-label="Store">
        <svg viewBox="0 0 24 24">
          <path d="M2 7l20-1v17L2 21z" fill="#fff" />
          <path d="M8 8V4q0-2 4-2t4 2v4" fill="none" stroke="#fff" strokeWidth="1.500" />
          <path d="M7 11l4-.5v3.500H7zM12 10.500l5-.5v4h-5zM7 15h4v3.500L7 18zM12 15h5v4l-5-.5z" fill="#111" />
        </svg>
      </AppButton>
      <AppButton $running aria-label="Chrome">
        <svg viewBox="0 0 24 24">
          <circle cx="12" cy="12" r="10.500" fill="#f4c52c" />
          <path d="M3 6.500A10.500 10.500 0 0 1 22 8H12z" fill="#de4a3b" />
          <path d="M2.800 6.800A10.500 10.500 0 0 0 11.500 22.500L15 15l-6-1z" fill="#36a159" />
          <circle cx="12" cy="12" r="5" fill="#fff" />
          <circle cx="12" cy="12" r="3.700" fill="#4385e6" />
        </svg>
      </AppButton>
      <AppButton aria-label="Edge">
        <svg viewBox="0 0 24 24">
          <path d="M2 11Q4 2 13 2q9 1 9 11v2H9q1 4 6 4 3 0 6-2v4q-3 2-7 2-9-1-9-8 0-5 5-8-3 0-5 4-2 0-3 1zM9 11h7q0-4-3-4-4 0-4 4z" fill="#1779d2" fillRule="evenodd" />
        </svg>
      </AppButton>
      <AppButton aria-label="Notes">
        <svg viewBox="0 0 24 24">
          <path d="M9 3l14 1-6 17-14 1z" fill="#8fc8d5" />
          <path d="M9 3l8 1-5 17-9 1z" fill="#d7edf0" />
          <path d="M19 8l-3 9" stroke="#40808c" strokeWidth="1.500" />
        </svg>
      </AppButton>
      <AppButton aria-label="Excel">
        <Office color="#207245" dark="#1d7044" letter="X" />
      </AppButton>
      <AppButton aria-label="Word">
        <Office color="#2a5699" dark="#2b579a" letter="W" />
      </AppButton>
      <AppButton aria-label="Explorer">
        <svg viewBox="0 0 24 24">
          <path d="M1 3h8l2 2h12v16H1z" fill="#e9c35d" />
          <path d="M1 8h22v13H1z" fill="#fbe195" />
          <path d="M5 21v-6h14v6h-3v-3H8v3z" fill="#4aa5dc" />
        </svg>
      </AppButton>
      <AppButton $active $running>
        <Adobe $color="#a58ae8" $bg="#25104a">Ae</Adobe>
      </AppButton>
      <AppButton>
        <Adobe $color="#e9963a" $bg="#2c1606">Ai</Adobe>
      </AppButton>
      <AppButton>
        <Adobe $color="#6f9de8" $bg="#0b1745">Ps</Adobe>
      </AppButton>
      <AppButton $running aria-label="Paint">
        <svg viewBox="0 0 24 24">
          <path d="M2 14Q3 5 13 5q9 0 9 7 0 5-6 5-1 5-7 5-7-1-7-8z" fill="#d9dfd6" />
          <circle cx="7" cy="12" r="2" fill="#5499c9" />
          <circle cx="12" cy="9" r="1.800" fill="#c9a34c" />
          <circle cx="8" cy="17" r="1.800" fill="#71ad70" />
          <path d="M15 12L22 1" stroke="#c49345" strokeWidth="2.500" />
        </svg>
      </AppButton>
    </Apps>
    <Tray>
      <TrayButton aria-label="Show hidden icons">
        <svg viewBox="0 0 14 14" fill="none" stroke="#ddd" strokeWidth="1.500">
          <path d="M2 9l5-5 5 5" />
        </svg>
      </TrayButton>
      <TrayButton aria-label="Mail">
        <svg viewBox="0 0 14 14">
          <circle cx="7" cy="7" r="6.800" fill="#d51f3a" />
          <path d="M3.500 10V4.500L7 7.500l3.500-3V10" fill="none" stroke="#fff" strokeWidth="1.600" />
        </svg>
      </TrayButton>
      <TrayButton aria-label="Dropbox">
        <svg viewBox="0 0 14 14">
          <path d="M4 0l3 2 3-2 4 3-3 2.500L14 8l-4 2.500L7 8l-3 2.500L0 8l3-2.500L0 3zM4 11l3-2 3 2-3 2z" fill="#eee" />
          <circle cx="10" cy="10.500" r="3.500" fill="#3faf55" />
        </svg>
      </TrayButton>
      <TrayButton aria-label="Network">
        <svg viewBox="0 0 14 14" fill="none" stroke="#bbb" strokeWidth="1.200">
          <path d="M1 12Q2 3 13 2M4 12q1-6 9-7M7 12q1-3 6-4M1 13h8M12 9v4" />
        </svg>
      </TrayButton>
      <TrayButton aria-label="Volume">
        <svg viewBox="0 0 14 14" fill="none" stroke="#ddd" strokeWidth="1">
          <path d="M1 5h2l3-3v10L3 9H1zM8 5q1 2 0 4M10 3.500q2 3.500 0 7M12 2q3 5 0 10" />
        </svg>
      </TrayButton>
      <TrayButton aria-label="Notifications">
        <svg viewBox="0 0 14 14">
          <path d="M0 0h14v11H9l-3 3v-3H0z" fill="#fff" />
          <path d="M3 3.500h8M3 5.500h8M3 7.500h6" stroke="#222" />
        </svg>
      </TrayButton>
      <TrayButton $width={16} aria-label="Keyboard">
        <svg viewBox="0 0 24 14" fill="none" stroke="#ccc" strokeWidth="1.300">
          <path d="M1 1h22v12H1zM3 4.500h18M3 7h18" />
          <path d="M6 10h12" />
        </svg>
      </TrayButton>
      <TrayButton>中</TrayButton>
      <TrayButton $width={15} aria-label="Input method">
        <svg viewBox="0 0 14 14">
          <path d="M0 0h14v14H0z" fill="#fff" />
          <path d="M4 2v3h6v6H6M3 5h2" fill="none" stroke="#222" strokeWidth="1.600" />
        </svg>
      </TrayButton>
      <Clock>
        下午 02:32
        <br />
        2016/7/20
      </Clock>
    </Tray>
  </Taskbar>
);

const menus = ["File", "Edit", "Composition", "Layer", "Effect", "Animation", "View", "Window", "Help"];

const toolGroups = [
  ["arrow", "hand", "zoom"],
  ["rotate", "camera", "anchor"],
  ["disc", "pen", "type"],
  ["brush", "stamp", "eraser"],
  ["roto"],
  ["pin"],
];

const App = () => {
  const [tool, setTool] = useState("arrow");

  return (
    <Screen>
      <GlobalStyle />
      <TitleBar>
        <Adobe $small $color="#b5a0ee" $bg="#2a1466">Ae</Adobe>
        <h1>Adobe After Effects - Untitled Project.aep *</h1>
        <WindowButton aria-label="Minimize">
          <svg viewBox="0 0 10 10"><path d="M0 5h10" /></svg>
        </WindowButton>
        <WindowButton aria-label="Restore">
          <svg viewBox="0 0 10 10" strokeWidth="1.500"><path d="M1 3h6v6H1zM3 3V1h6v6H7" /></svg>
        </WindowButton>
        <WindowButton aria-label="Close">
          <svg viewBox="0 0 10 10"><path d="M1 1l8 8M9 1L1 9" /></svg>
        </WindowButton>
      </TitleBar>
      <MenuBar>
        {menus.map((name) => (
          <a href="#menu" key={name}>{name}</a>
        ))}
      </MenuBar>
      <Toolbar $height={10} $pad={1}>
        <Glyph name="grip" size={4} color="#777" />
        {toolGroups.map((group, i) => (
          <React.Fragment key={i}>
            {group.map((name) => (
              <IconButton key={name} aria-label={name} $pressed={tool === name} onClick={() => setTool(name)}>
                <Glyph name={name} size={6} />
              </IconButton>
            ))}
            <Gap $width={4} />
          </React.Fragment>
        ))}
        <Gap $width={10} />
        <IconButton $width={7} $dim><Glyph name="axis" /></IconButton>
        <IconButton $width={7} $dim><Glyph name="dot" /></IconButton>
        <IconButton $width={7} $dim><Glyph name="axisLines" /></IconButton>
        <Gap $width={4} />
        <Orange>Fill:</Orange>
        <Gap $width={1} />
        <Swatch $fill="#7d5038" $edge="#5c463a" $width={8} $height={6} />
        <Gap $width={5} />
        <Orange>Stroke:</Orange>
        <Gap $width={1} />
        <Swatch $fill="#444" $edge="#ccc" $width={8} $height={5} />
        <Gap $width={5} />
        <span>- px</span>
        <Gap $width={11} />
        <span>Add:</span>
        <Gap $width={1} />
        <Glyph name="ring" size={5} color="#ddd" />
        <Spring />
        <span>Workspace:</span>
        <Gap $width={3} />
        <Select label="Workspace" value="Standard" width={51} />
        <Gap $width={3} />
        <Search label="Search help" placeholder="Search Help" arrow={false} width={72} />
        <Gap $width={2} />
      </Toolbar>
      <Workspace>
        <ProjectPanel />
        <CompositionPanel />
        <SidePanels />
      </Workspace>
      <Timeline />
      <WindowsTaskbar />
    </Screen>
  );
};

export default App;
